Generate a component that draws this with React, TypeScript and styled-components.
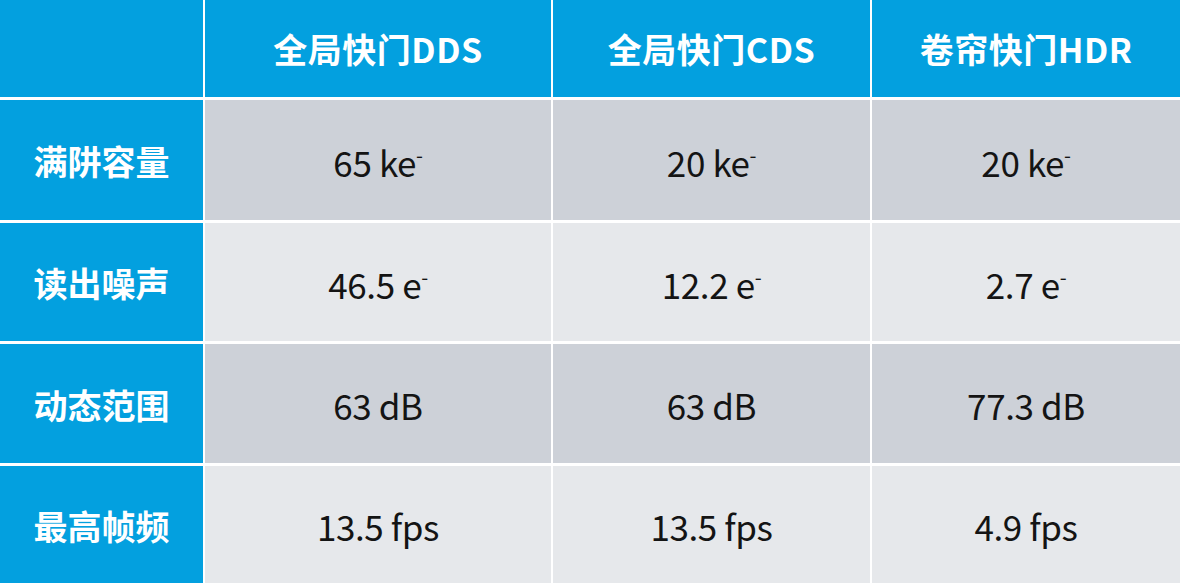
import { Fragment } from 'react';
import styled, { createGlobalStyle } from 'styled-components';

const GlobalStyle = createGlobalStyle`
    html, body {
        margin: 0;
        padding: 0;
        background: #ffffff;
    }
    body {
        font-family: "Noto Sans CJK SC", "Noto Sans", sans-serif;
    }
`;

const Table = styled.div`
    display: grid;
    width: 1180px;
    height: 583px;
    grid-template-columns: 203px 346px 317px 1fr;
    grid-template-rows: 97px 120px 118px 119px 117px;
    column-gap: 2px;
    row-gap: 3px;
    background: #ffffff;
    overflow: hidden;
`;

const Cell = styled.div<{ $tone: 'blue' | 'dark' | 'light' }>`
    display: flex;
    align-items: center;
    justify-content: center;
    background: ${props =>
        props.$tone === 'blue' ? '#03a0df' : props.$tone === 'dark' ? '#cdd1d8' : '#e6e8eb'};
`;

const HeadText = styled.span`
    color: #ffffff;
    font-size: 34px;
    font-weight: 700;
    letter-spacing: 0.5px;
    line-height: 1;
`;

const RowLabel = styled.span`
    color: #ffffff;
    font-size: 34px;
    font-weight: 700;
    line-height: 1;
    padding-top: 2px;
`;

const Value = styled.span`
    color: #141414;
    font-size: 35px;
    font-weight: 400;
    line-height: 1;
    letter-spacing: -0.4px;
    padding-top: 2px;
`;

const Sup = styled.sup`
    font-size: 20px;
    vertical-align: 14px;
    line-height: 0;
`;

type Val = { num: string; unit: string; sup?: boolean };

const columns = ['全局快门DDS', '全局快门CDS', '卷帘快门HDR'];

const rows: { label: string; values: Val[] }[] = [
    {
        label: '满阱容量',
        values: [
            { num: '65', unit: 'ke', sup: true },
            { num: '20', unit: 'ke', sup: true },
            { num: '20', unit: 'ke', sup: true },
        ],
    },
    {
        label: '读出噪声',
        values: [
            { num: '46.5', unit: 'e', sup: true },
            { num: '12.2', unit: 'e', sup: true },
            { num: '2.7', unit: 'e', sup: true },
        ],
    },
    {
        label: '动态范围',
        values: [
            { num: '63', unit: 'dB' },
            { num: '63', unit: 'dB' },
            { num: '77.3', unit: 'dB' },
        ],
    },
    {
        label: '最高帧频',
        values: [
            { num: '13.5', unit: 'fps' },
            { num: '13.5', unit: 'fps' },
            { num: '4.9', unit: 'fps' },
        ],
    },
];

export default function App() {
    return (
        <>
            <GlobalStyle />
            <Table>
                <Cell $tone="blue" />
                {columns.map(c => (
                    <Cell key={c} $tone="blue">
                        <HeadText>{c}</HeadText>
                    </Cell>
                ))}
                {rows.map((row, i) => (
                    <Fragment key={row.label}>
                        <Cell $tone="blue">
                            <RowLabel>{row.label}</RowLabel>
                        </Cell>
                        {row.values.map((v, j) => (
                            <Cell key={j} $tone={i % 2 === 0 ? 'dark' : 'light'}>
                                <Value>
                                    {v.num} {v.unit}
                                    {v.sup ? <Sup>-</Sup> : null}
                                </Value>
                            </Cell>
                        ))}
                    </Fragment>
                ))}
            </Table>
        </>
    );
}
